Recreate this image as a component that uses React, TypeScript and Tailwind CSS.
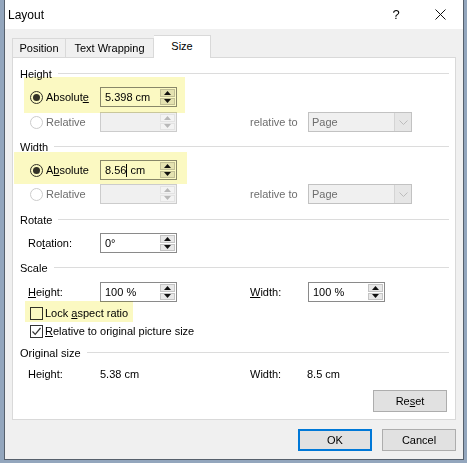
import React from "react";

function Arrows({ disabled }: { disabled?: boolean }) {
  const fill = disabled ? "#b8b8b8" : "#111111";
  return (
    <div className="flex flex-col w-[16px] py-[1px] pr-[1px] gap-[1px]">
      <div
        className={`flex-1 flex items-center justify-center border ${
          disabled ? "border-[#e3e3e3] bg-[#f3f3f3]" : "border-[#c4c4c4] bg-[#e8e8e8]"
        }`}
      >
        <svg width="7" height="4" viewBox="0 0 7 4">
          <path d="M0 4 L3.5 0 L7 4 Z" fill={fill} />
        </svg>
      </div>
      <div
        className={`flex-1 flex items-center justify-center border ${
          disabled ? "border-[#e3e3e3] bg-[#f3f3f3]" : "border-[#c4c4c4] bg-[#e8e8e8]"
        }`}
      >
        <svg width="7" height="4" viewBox="0 0 7 4">
          <path d="M0 0 L7 0 L3.5 4 Z" fill={fill} />
        </svg>
      </div>
    </div>
  );
}

function SpinBox({ children, disabled }: { children?: React.ReactNode; disabled?: boolean }) {
  return (
    <div
      className={`w-[77px] h-[20px] border flex items-stretch ${
        disabled ? "bg-[#f0f0f0] border-[#cccccc]" : "bg-white border-[#8a8a8a]"
      }`}
    >
      <div className="flex-1 flex items-center pl-[4px] whitespace-pre">{children}</div>
      <Arrows disabled={disabled} />
    </div>
  );
}

function Radio({ checked, disabled }: { checked?: boolean; disabled?: boolean }) {
  return (
    <div
      className={`w-[13px] h-[13px] rounded-full border flex items-center justify-center bg-white ${
        disabled ? "border-[#cccccc]" : "border-[#333333]"
      }`}
    >
      {checked && <div className="w-[7px] h-[7px] rounded-full bg-[#333333]" />}
    </div>
  );
}

function Check({ checked }: { checked?: boolean }) {
  return (
    <div className="w-[13px] h-[13px] border border-[#333333] bg-white flex items-center justify-center">
      {checked && (
        <svg width="11" height="11" viewBox="0 0 11 11">
          <path d="M1.5 5.5 L4.2 8.3 L9.5 2" fill="none" stroke="#333333" strokeWidth="1.2" />
        </svg>
      )}
    </div>
  );
}

function Heading({ children, className }: { children: React.ReactNode; className?: string }) {
  return (
    <div className={`flex items-center h-[14px] pl-[7px] pr-[6px] ${className ?? ""}`}>
      <span>{children}</span>
      <div className="flex-1 h-px bg-[#dcdcdc] ml-[6px] mt-[-1px]" />
    </div>
  );
}

function PageSelect() {
  return (
    <div className="w-[104px] h-[20px] border border-[#c2c2c2] bg-[#f0f0f0] flex items-stretch text-[#6d6d6d]">
      <div className="flex-1 flex items-center pl-[3px]">Page</div>
      <div className="w-[17px] bg-[#e6e6e6] border-l border-[#d4d4d4] flex items-center justify-center">
        <svg width="9" height="5" viewBox="0 0 9 5">
          <path d="M0.5 0.5 L4.5 4.5 L8.5 0.5" fill="none" stroke="#bcbcbc" strokeWidth="1" />
        </svg>
      </div>
    </div>
  );
}

function Button({ children, primary, className }: { children: React.ReactNode; primary?: boolean; className?: string }) {
  return (
    <div
      className={`w-[74px] h-[22px] flex items-center justify-center bg-[#e1e1e1] ${
        primary ? "border-2 border-[#0078d7]" : "border border-[#adadad]"
      } ${className ?? ""}`}
    >
      {children}
    </div>
  );
}

export default function App() {
  return (
    <div className="w-[467px] h-[463px] bg-[#93a6bd] font-['Liberation_Sans',Arial,sans-serif] text-[11px] text-black overflow-hidden">
      <div className="ml-[4px] w-[460px] h-[460px] bg-[#f0f0f0] border-x border-b border-[#56606c] flex flex-col">
        {/* Title bar */}
        <div className="h-[29px] shrink-0 bg-white flex items-center pl-[3px] text-[12px]">
          <span>Layout</span>
          <div className="ml-auto flex items-center h-full">
            <div className="w-[46px] h-full flex items-center justify-center text-[13px] pl-[4px]">?</div>
            <div className="w-[46px] h-full flex items-center justify-center">
              <svg width="11" height="11" viewBox="0 0 11 11">
                <path d="M0.5 0.5 L10.5 10.5 M10.5 0.5 L0.5 10.5" stroke="#111111" strokeWidth="1" />
              </svg>
            </div>
          </div>
        </div>

        {/* Tabs */}
        <div className="mt-[6px] h-[22px] px-[7px] flex items-end">
          <div className="w-[54px] h-[19px] border-l border-t border-r border-[#d9d9d9] flex items-center justify-center pt-[1px]">
            Position
          </div>
          <div className="w-[88px] h-[19px] border-t border-r border-[#d9d9d9] flex items-center justify-center pt-[1px]">
            Text Wrapping
          </div>
          <div className="w-[57px] h-[23px] mb-[-1px] relative z-10 bg-white border-t border-r border-[#d9d9d9] flex items-center justify-center pb-[2px]">
            Size
          </div>
        </div>

        {/* Panel */}
        <div className="mx-[7px] h-[363px] border border-[#d9d9d9] bg-white relative flex flex-col pt-[9px]">
          <Heading>Height</Heading>
          <div className="mt-[6px] h-[20px] flex items-center pl-[15px]">
            <div className="w-[72px] flex items-center gap-[3px] pl-[2px]">
              <Radio checked />
              <span>
                Absolut<u>e</u>
              </span>
            </div>
            <SpinBox>5.398 cm</SpinBox>
          </div>
          <div className="mt-[5px] h-[20px] flex items-center pl-[15px] text-[#6d6d6d]">
            <div className="w-[72px] flex items-center gap-[3px] pl-[2px]">
              <Radio disabled />
              <span>Relative</span>
            </div>
            <SpinBox disabled />
            <div className="ml-[73px] w-[58px]">relative to</div>
            <PageSelect />
          </div>

          <Heading className="mt-[8px]">Width</Heading>
          <div className="mt-[6px] h-[20px] flex items-center pl-[15px]">
            <div className="w-[72px] flex items-center gap-[3px] pl-[2px]">
              <Radio checked />
              <span>
                A<u>b</u>solute
              </span>
            </div>
            <SpinBox>
              <span>8.56</span>
              <span className="inline-block w-px h-[13px] bg-black" />
              <span> cm</span>
            </SpinBox>
          </div>
          <div className="mt-[4px] h-[20px] flex items-center pl-[15px] text-[#6d6d6d]">
            <div className="w-[72px] flex items-center gap-[3px] pl-[2px]">
              <Radio disabled />
              <span>Relative</span>
            </div>
            <SpinBox disabled />
            <div className="ml-[73px] w-[58px]">relative to</div>
            <PageSelect />
          </div>

          <Heading className="mt-[9px]">Rotate</Heading>
          <div className="mt-[6px] h-[20px] flex items-center pl-[15px]">
            <div className="w-[72px]">
              Ro<u>t</u>ation:
            </div>
            <SpinBox>0°</SpinBox>
          </div>

          <Heading className="mt-[8px]">Scale</Heading>
          <div className="mt-[7px] h-[20px] flex items-center pl-[15px]">
            <div className="w-[72px]">
              <u>H</u>eight:
            </div>
            <SpinBox>100 %</SpinBox>
            <div className="ml-[73px] w-[58px]">
              <u>W</u>idth:
            </div>
            <SpinBox>100 %</SpinBox>
          </div>
          <div className="mt-[3px] h-[16px] flex items-center pl-[17px] gap-[2px]">
            <Check />
            <span>
              Lock <u>a</u>spect ratio
            </span>
          </div>
          <div className="mt-[2px] h-[16px] flex items-center pl-[17px] gap-[2px]">
            <Check checked />
            <span>
              <u>R</u>elative to original picture size
            </span>
          </div>

          <Heading className="mt-[7px]">Original size</Heading>
          <div className="mt-[7px] h-[14px] flex items-center pl-[15px]">
            <div className="w-[72px]">Height:</div>
            <div className="w-[150px]">5.38 cm</div>
            <div className="w-[57px]">Width:</div>
            <div>8.5 cm</div>
          </div>

          <div className="mt-[9px] flex justify-end pr-[8px]">
            <Button>
              Re<u>s</u>et
            </Button>
          </div>

          {/* Highlights */}
          <div className="absolute left-[11px] top-[19px] w-[161px] h-[36px] bg-[#fbf9c2] mix-blend-multiply pointer-events-none" />
          <div className="absolute left-[1px] top-[94px] w-[173px] h-[32px] bg-[#fbf9c2] mix-blend-multiply pointer-events-none" />
          <div className="absolute left-[12px] top-[243px] w-[108px] h-[21px] bg-[#fbf9c2] mix-blend-multiply pointer-events-none" />
        </div>

        {/* Buttons */}
        <div className="mt-[9px] flex justify-end gap-[10px] pr-[7px]">
          <Button primary>OK</Button>
          <Button>Cancel</Button>
        </div>
      </div>
    </div>
  );
}
